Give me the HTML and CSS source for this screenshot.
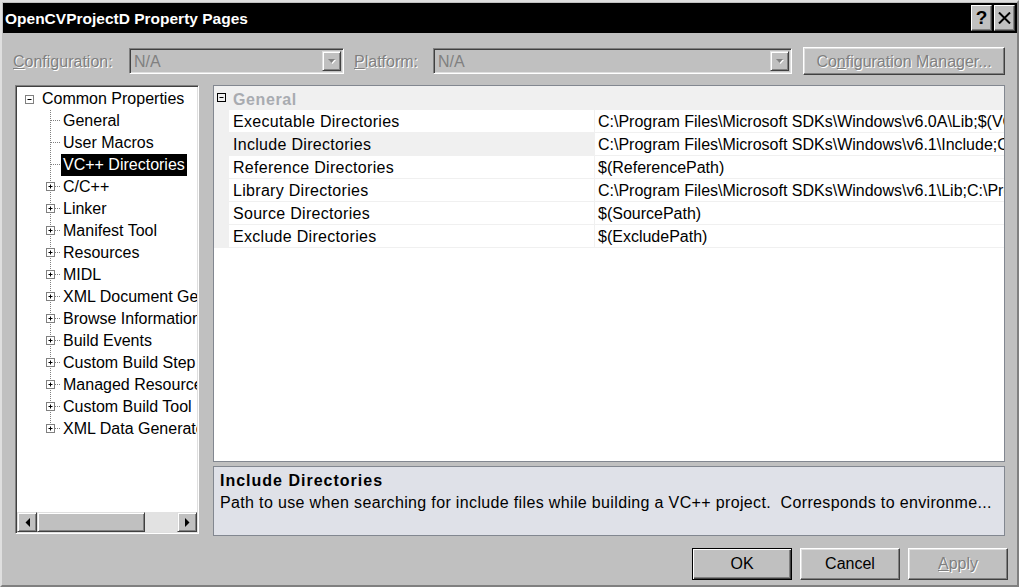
FILE: index.html
```html
<!DOCTYPE html>
<html lang="en">
<head>
  <meta charset="UTF-8" />
  <title>OpenCVProjectD Property Pages</title>
  <link rel="stylesheet" href="styles.css">
</head>
<body>
  <svg width="0" height="0" class="defs">
    <symbol id="t-leaf" viewBox="0 0 21 22">
      <path d="M10.5 0V22M11 10.5H21" stroke="#808080" stroke-dasharray="1 1" fill="none"/>
    </symbol>
    <symbol id="t-plus" viewBox="0 0 21 22">
      <path d="M10.5 0V22M15 10.5H21" stroke="#808080" stroke-dasharray="1 1" fill="none"/>
      <rect x="6.5" y="6.5" width="8" height="8" fill="#fff" stroke="#808080"/>
      <path d="M8.5 10.5H12.5M10.5 8.5V12.5" stroke="#000"/>
    </symbol>
    <symbol id="t-plus-last" viewBox="0 0 21 22">
      <path d="M10.5 0V7M15 10.5H21" stroke="#808080" stroke-dasharray="1 1" fill="none"/>
      <rect x="6.5" y="6.5" width="8" height="8" fill="#fff" stroke="#808080"/>
      <path d="M8.5 10.5H12.5M10.5 8.5V12.5" stroke="#000"/>
    </symbol>
  </svg>

  <div class="window">
    <div class="titlebar">
      <span class="title">OpenCVProjectD Property Pages</span>
      <div class="caption-btns">
        <div class="cap-btn help">?</div>
        <div class="cap-btn">
          <svg width="13" height="12" viewBox="0 0 13 12"><path d="M1 0.5L12 11.5M12 0.5L1 11.5" stroke="#000" stroke-width="2"/></svg>
        </div>
      </div>
    </div>

    <div class="config-row">
      <span class="lbl lbl-config"><u>C</u>onfiguration:</span>
      <div class="combo combo-config">
        <span class="combo-text">N/A</span>
        <span class="drop"><svg width="7" height="5" viewBox="0 0 7 5"><path d="M0 0H7L3.5 4Z" fill="#808080"/></svg></span>
      </div>
      <span class="lbl lbl-platform"><u>P</u>latform:</span>
      <div class="combo combo-platform">
        <span class="combo-text">N/A</span>
        <span class="drop"><svg width="7" height="5" viewBox="0 0 7 5"><path d="M0 0H7L3.5 4Z" fill="#808080"/></svg></span>
      </div>
      <div class="btn btn-cfgmgr disabled">Co<u>n</u>figuration Manager...</div>
    </div>

    <div class="content">
      <div class="tree">
        <div class="tree-items">
          <div class="node root">
            <svg class="exp" width="9" height="9" viewBox="0 0 9 9"><rect x="0.5" y="0.5" width="8" height="8" fill="#fff" stroke="#808080"/><path d="M2.5 4.5H6.5" stroke="#000"/></svg>
            <span class="node-text">Common Properties</span>
          </div>
          <div class="node"><svg class="gut"><use href="#t-leaf"/></svg><span class="node-text">General</span></div>
          <div class="node"><svg class="gut"><use href="#t-leaf"/></svg><span class="node-text">User Macros</span></div>
          <div class="node"><svg class="gut"><use href="#t-leaf"/></svg><span class="node-text selected">VC++ Directories</span></div>
          <div class="node"><svg class="gut"><use href="#t-plus"/></svg><span class="node-text">C/C++</span></div>
          <div class="node"><svg class="gut"><use href="#t-plus"/></svg><span class="node-text">Linker</span></div>
          <div class="node"><svg class="gut"><use href="#t-plus"/></svg><span class="node-text">Manifest Tool</span></div>
          <div class="node"><svg class="gut"><use href="#t-plus"/></svg><span class="node-text">Resources</span></div>
          <div class="node"><svg class="gut"><use href="#t-plus"/></svg><span class="node-text">MIDL</span></div>
          <div class="node"><svg class="gut"><use href="#t-plus"/></svg><span class="node-text">XML Document Generator</span></div>
          <div class="node"><svg class="gut"><use href="#t-plus"/></svg><span class="node-text">Browse Information</span></div>
          <div class="node"><svg class="gut"><use href="#t-plus"/></svg><span class="node-text">Build Events</span></div>
          <div class="node"><svg class="gut"><use href="#t-plus"/></svg><span class="node-text">Custom Build Step</span></div>
          <div class="node"><svg class="gut"><use href="#t-plus"/></svg><span class="node-text">Managed Resources</span></div>
          <div class="node"><svg class="gut"><use href="#t-plus"/></svg><span class="node-text">Custom Build Tool</span></div>
          <div class="node"><svg class="gut"><use href="#t-plus-last"/></svg><span class="node-text">XML Data Generator</span></div>
        </div>
        <div class="hscroll">
          <div class="sb-btn"><svg width="5" height="9" viewBox="0 0 5 9"><path d="M5 0V9L0.5 4.5Z" fill="#000"/></svg></div>
          <div class="sb-thumb"></div>
          <div class="sb-track"></div>
          <div class="sb-btn"><svg width="5" height="9" viewBox="0 0 5 9"><path d="M0 0V9L4.5 4.5Z" fill="#000"/></svg></div>
        </div>
      </div>

      <div class="right">
        <div class="grid">
          <div class="cat-row">
            <svg class="cat-exp" width="9" height="9" viewBox="0 0 9 9"><rect x="0.5" y="0.5" width="8" height="8" fill="none" stroke="#000"/><path d="M2.5 4.5H6.5" stroke="#000"/></svg>
            <span class="cat-name">General</span>
          </div>
          <div class="prop-row">
            <div class="margin"></div>
            <div class="name">Executable Directories</div>
            <div class="value">C:\Program Files\Microsoft SDKs\Windows\v6.0A\Lib;$(VCInstallDir)bin;$(WindowsSdkDir)bin</div>
          </div>
          <div class="prop-row current">
            <div class="margin"></div>
            <div class="name">Include Directories</div>
            <div class="value">C:\Program Files\Microsoft SDKs\Windows\v6.1\Include;C:\OpenCV\include</div>
          </div>
          <div class="prop-row">
            <div class="margin"></div>
            <div class="name">Reference Directories</div>
            <div class="value">$(ReferencePath)</div>
          </div>
          <div class="prop-row">
            <div class="margin"></div>
            <div class="name">Library Directories</div>
            <div class="value">C:\Program Files\Microsoft SDKs\Windows\v6.1\Lib;C:\Program Files\OpenCV\lib</div>
          </div>
          <div class="prop-row">
            <div class="margin"></div>
            <div class="name">Source Directories</div>
            <div class="value">$(SourcePath)</div>
          </div>
          <div class="prop-row">
            <div class="margin"></div>
            <div class="name">Exclude Directories</div>
            <div class="value">$(ExcludePath)</div>
          </div>
        </div>
        <div class="desc">
          <div class="desc-title">Include Directories</div>
          <div class="desc-text">Path to use when searching for include files while building a VC++ project.&nbsp; Corresponds to environme...</div>
        </div>
      </div>
    </div>

    <div class="buttons">
      <div class="btn default">OK</div>
      <div class="btn">Cancel</div>
      <div class="btn disabled"><u>A</u>pply</div>
    </div>
  </div>
</body>
</html>
```

FILE: styles.css
```css
* {
  box-sizing: border-box;
}
body {
  margin: 0;
  background: #c0c0c0;
  font-family: "Liberation Sans", Arial, sans-serif;
  font-size: 16px;
  color: #000;
}
.defs {
  position: absolute;
  width: 0;
  height: 0;
}
.window {
  width: 1019px;
  height: 587px;
  background: #c0c0c0;
  border-top: 2px solid #dfdfdf;
  border-left: 2px solid #dfdfdf;
  border-right: 2px solid #808080;
  border-bottom: 2px solid #808080;
  display: flex;
  flex-direction: column;
  overflow: hidden;
}

/* title bar */
.titlebar {
  height: 30px;
  margin: 1px 0 0 1px;
  background: #000;
  display: flex;
  align-items: center;
  justify-content: space-between;
  padding: 0 2px 0 2px;
}
.title {
  color: #fff;
  font-weight: bold;
  font-size: 15.5px;
  padding-top: 1px;
}
.caption-btns {
  display: flex;
  gap: 2px;
}
.cap-btn {
  width: 21px;
  height: 26px;
  background: #c0c0c0;
  border-top: 1px solid #fff;
  border-left: 1px solid #fff;
  border-right: 1px solid #404040;
  border-bottom: 1px solid #404040;
  box-shadow: inset -1px -1px #808080;
  display: flex;
  align-items: center;
  justify-content: center;
}
.cap-btn.help {
  font-weight: bold;
  font-size: 19px;
}

/* configuration row */
.config-row {
  height: 28px;
  margin-top: 14px;
  padding-left: 11px;
  display: flex;
  align-items: center;
}
.lbl,
.disabled {
  color: #808080;
  text-shadow: 1px 1px 0 #fff;
}
.lbl {
  padding-top: 2px;
}
.lbl-config {
  width: 116px;
}
.lbl-platform {
  width: 79px;
  margin-left: 10px;
}
.combo {
  height: 26px;
  background: #c0c0c0;
  border-top: 1px solid #808080;
  border-left: 1px solid #808080;
  border-right: 1px solid #fff;
  border-bottom: 1px solid #fff;
  box-shadow: inset 1px 1px #404040, inset -1px -1px #dfdfdf;
  display: flex;
  align-items: center;
  justify-content: space-between;
  padding: 2px;
}
.combo-config {
  width: 215px;
}
.combo-platform {
  width: 359px;
}
.combo-text {
  color: #808080;
  padding: 2px 0 0 2px;
}
.drop {
  width: 19px;
  height: 20px;
  background: #c0c0c0;
  border-top: 1px solid #dfdfdf;
  border-left: 1px solid #dfdfdf;
  border-right: 1px solid #404040;
  border-bottom: 1px solid #404040;
  box-shadow: inset 1px 1px #fff, inset -1px -1px #808080;
  display: flex;
  align-items: center;
  justify-content: center;
}
.drop svg {
  filter: drop-shadow(1px 1px 0 #fff);
}

.btn {
  height: 32px;
  width: 100px;
  background: #c0c0c0;
  border-top: 1px solid #fff;
  border-left: 1px solid #fff;
  border-right: 1px solid #404040;
  border-bottom: 1px solid #404040;
  box-shadow: inset -1px -1px #808080, inset 1px 1px #dfdfdf;
  display: flex;
  align-items: center;
  justify-content: center;
}
.btn-cfgmgr {
  width: 202px;
  height: 28px;
  margin-left: 11px;
  padding-top: 1px;
}
.btn.default {
  border: 1px solid #000;
  box-shadow: inset 1px 1px #fff, inset -1px -1px #404040, inset -2px -2px #808080;
}

/* main content */
.content {
  display: flex;
  margin-top: 10px;
  padding-left: 13px;
}
.tree {
  width: 184px;
  height: 449px;
  background: #fff;
  border-top: 1px solid #808080;
  border-left: 1px solid #808080;
  border-right: 1px solid #fff;
  border-bottom: 1px solid #fff;
  box-shadow: inset 1px 1px #404040, inset -1px -1px #dfdfdf;
  padding: 1px;
  display: flex;
  flex-direction: column;
}
.tree-items {
  flex: 1;
  overflow: hidden;
  white-space: nowrap;
  padding-top: 1px;
}
.node {
  height: 22px;
  display: flex;
  align-items: center;
  padding-left: 23px;
}
.node.root {
  padding-left: 8px;
}
.exp {
  margin-right: 6px;
}
.gut {
  width: 21px;
  height: 22px;
  flex: none;
}
.node-text {
  padding: 0 2px;
  line-height: 22px;
}
.node-text.selected {
  background: #000;
  color: #fff;
}

.hscroll {
  height: 20px;
  display: flex;
}
.sb-btn,
.sb-thumb {
  background: #c0c0c0;
  border-top: 1px solid #dfdfdf;
  border-left: 1px solid #dfdfdf;
  border-right: 1px solid #404040;
  border-bottom: 1px solid #404040;
  box-shadow: inset 1px 1px #fff, inset -1px -1px #808080;
}
.sb-btn {
  width: 20px;
  display: flex;
  align-items: center;
  justify-content: center;
}
.sb-thumb {
  width: 108px;
}
.sb-track {
  flex: 1;
  background: #e2e2e2;
}

.right {
  margin-left: 14px;
  width: 792px;
  display: flex;
  flex-direction: column;
}
.grid {
  height: 377px;
  background: #fff;
  border: 1px solid #828790;
  overflow: hidden;
  white-space: nowrap;
}
.cat-row {
  height: 24px;
  background: #f0f0f0;
  display: flex;
  align-items: center;
  padding: 3px 0 0 3px;
}
.cat-exp {
  margin-right: 7px;
  margin-top: -4px;
}
.cat-name {
  font-weight: bold;
  color: #a8abb0;
  letter-spacing: 0.6px;
}
.prop-row {
  height: 23px;
  display: flex;
}
.prop-row .margin {
  width: 15px;
  background: #f0f0f0;
}
.prop-row .name {
  width: 365px;
  padding-left: 4px;
  line-height: 24px;
  letter-spacing: 0.3px;
  border-bottom: 1px solid #f0f0f0;
}
.prop-row.current .name {
  background: #f0f0f0;
}
.prop-row .value {
  flex: 1;
  overflow: hidden;
  padding-left: 3px;
  line-height: 24px;
  border-left: 1px solid #f0f0f0;
  border-bottom: 1px solid #f0f0f0;
}

.desc {
  margin-top: 4px;
  height: 70px;
  background: #dfe1e8;
  border: 1px solid #828790;
  padding: 3px 6px 0;
  line-height: 22px;
  white-space: nowrap;
  overflow: hidden;
}
.desc-title {
  font-weight: bold;
  letter-spacing: 1px;
}
.desc-text {
  letter-spacing: 0.35px;
}

/* dialog buttons */
.buttons {
  margin-top: 12px;
  padding-right: 9px;
  display: flex;
  justify-content: flex-end;
  gap: 8px;
}
```
